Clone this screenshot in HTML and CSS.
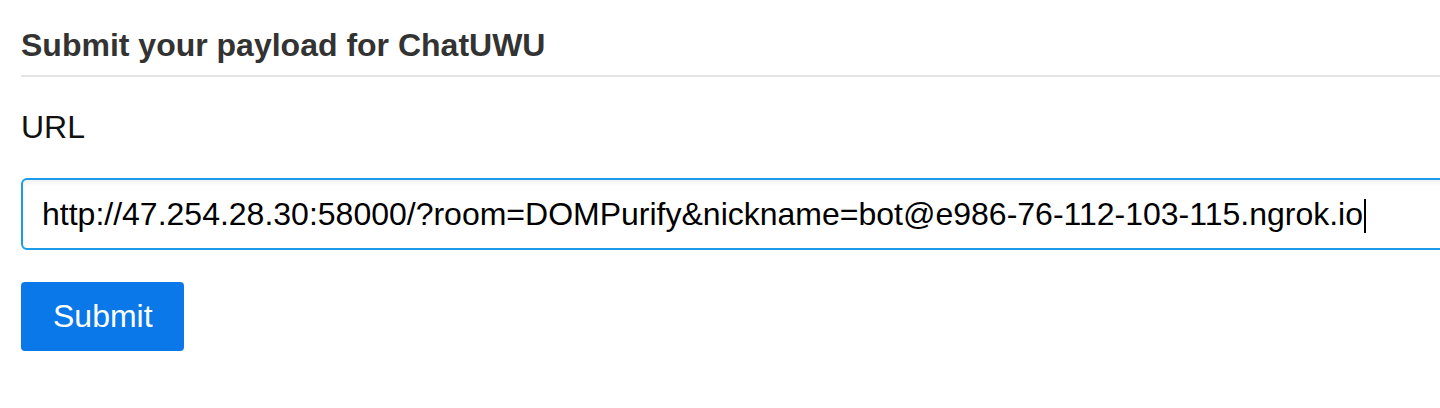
FILE: index.html
```html
<!DOCTYPE html>
<html lang="en">
<head>
<meta charset="utf-8">
<title>Submit your payload for ChatUWU</title>
<link rel="stylesheet" href="styles.css">
</head>
<body>
<main class="page">
  <h1 class="title">Submit your payload for ChatUWU</h1>
  <form class="form">
    <label class="label">URL</label>
    <div class="input">http://47.254.28.30:58000/?room=DOMPurify&amp;nickname=bot@e986-76-112-103-115.ngrok.io<span class="caret"></span></div>
    <div class="actions"><button type="button" class="btn">Submit</button></div>
  </form>
</main>
</body>
</html>
```
FILE: styles.css
```css
html, body {
  margin: 0;
  padding: 0;
  background: #fff;
  overflow: hidden;
}
.page {
  padding: 27px 0 0 21px;
  font-family: "Liberation Sans", Arial, Helvetica, sans-serif;
  font-size: 32px;
}
.title {
  margin: 0;
  font-size: 32px;
  font-weight: bold;
  color: #333;
  line-height: 37px;
  padding-bottom: 11px;
  border-bottom: 2px solid #e5e5e5;
}
.form {
  display: flex;
  flex-direction: column;
  align-items: flex-start;
  padding-top: 32px;
  gap: 32px;
}
.label {
  display: block;
  line-height: 37px;
  color: #111;
}
.input {
  box-sizing: border-box;
  width: calc(100% + 20px);
  height: 72px;
  border: 2px solid #1c9be6;
  border-radius: 6px;
  padding: 15px 19px;
  line-height: 38px;
  color: #000;
  white-space: nowrap;
  box-shadow: inset 0 3px 4px rgba(0,0,0,0.06);
}
.caret {
  display: inline-block;
  width: 2px;
  height: 34px;
  background: #000;
  vertical-align: -8px;
  margin-left: 1px;
}
.btn {
  font-family: inherit;
  font-size: 32px;
  line-height: 37px;
  color: #fff;
  background: #0a78e8;
  border: none;
  border-radius: 4px;
  padding: 16px 32px;
  height: 69px;
  width: 163px;
  cursor: pointer;
}
```
